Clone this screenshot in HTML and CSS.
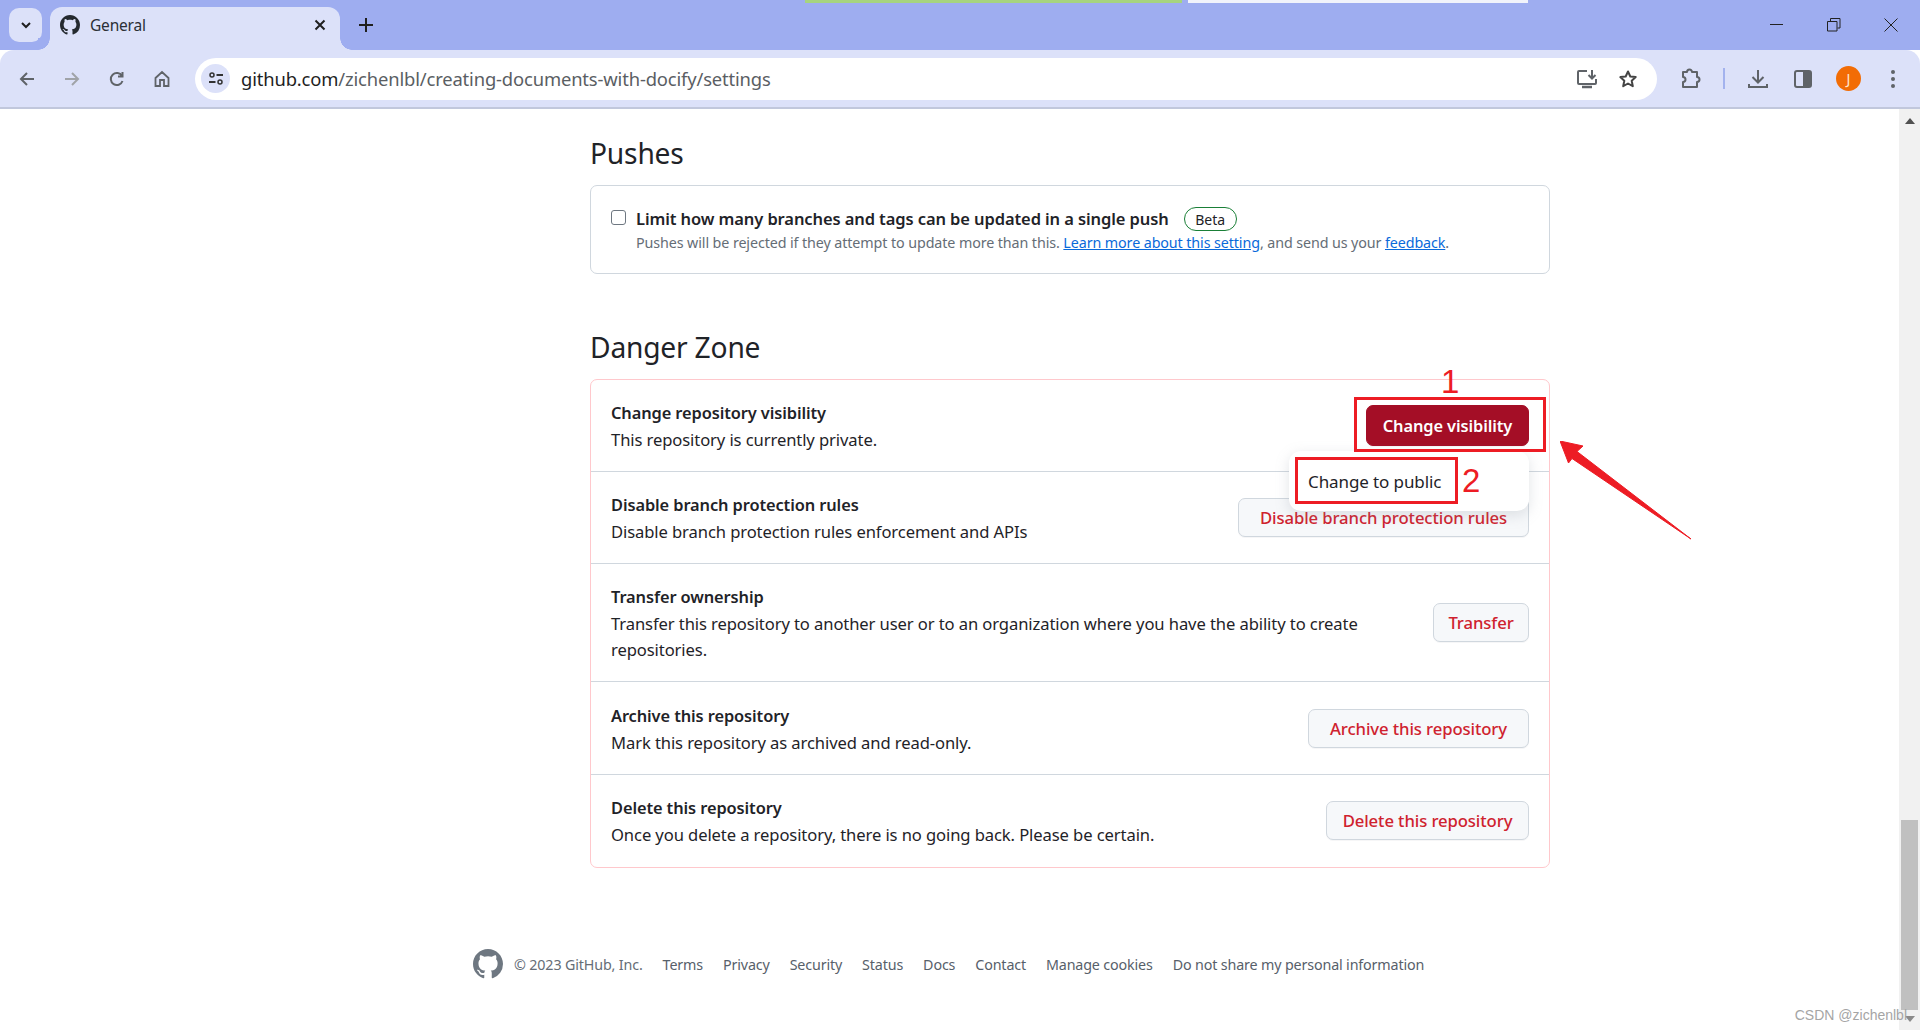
FILE: index.html
```html
<!DOCTYPE html>
<html lang="en">
<head>
<meta charset="utf-8">
<title>General</title>
<link rel="stylesheet" href="styles.css">
</head>
<body>
<svg class="defs" width="0" height="0"><defs><symbol id="gh" viewBox="0 0 16 16"><path d="M8 0C3.58 0 0 3.58 0 8c0 3.54 2.29 6.53 5.47 7.59.4.07.55-.17.55-.38 0-.19-.01-.82-.01-1.49-2.01.37-2.53-.49-2.69-.94-.09-.23-.48-.94-.82-1.13-.28-.15-.68-.52-.01-.53.63-.01 1.08.58 1.23.82.72 1.21 1.87.87 2.33.66.07-.52.28-.87.51-1.07-1.78-.2-3.64-.89-3.64-3.95 0-.87.31-1.59.82-2.15-.08-.2-.36-1.02.08-2.12 0 0 .67-.21 2.2.82.64-.18 1.32-.27 2-.27.68 0 1.36.09 2 .27 1.53-1.04 2.2-.82 2.2-.82.44 1.1.16 1.92.08 2.12.51.56.82 1.27.82 2.15 0 3.07-1.87 3.75-3.65 3.95.29.25.54.73.54 1.48 0 1.07-.01 1.93-.01 2.2 0 .21.15.46.55.38A8.013 8.013 0 0016 8c0-4.42-3.58-8-8-8z"/></symbol></defs></svg>
<header class="chrome">
  <div class="tabstrip">
    <div class="strip-marks"><span class="mark-green"></span><span class="mark-white"></span></div>
    <button class="tab-search"><svg width="14" height="14" viewBox="0 0 14 14"><path d="M3 5l4 4 4-4" fill="none" stroke="#1f1f1f" stroke-width="2"/></svg></button>
    <div class="tab">
      <svg class="tab-icon" width="20" height="20"><use href="#gh"/></svg>
      <span class="tab-title">General</span>
      <svg class="tab-close" width="12" height="12" viewBox="0 0 12 12"><path d="M1.5 1.5l9 9M10.5 1.5l-9 9" stroke="#1f1f1f" stroke-width="2"/></svg>
    </div>
    <svg class="new-tab" width="14" height="14" viewBox="0 0 14 14"><path d="M7 0v14M0 7h14" stroke="#1f1f1f" stroke-width="2"/></svg>
    <div class="win-controls">
      <svg width="14" height="14" viewBox="0 0 14 14"><path d="M0 6.500h13" stroke="#222" stroke-width="1"/></svg>
      <svg width="14" height="14" viewBox="0 0 14 14"><path d="M.5 3.500h9.500v9.500H.5zM3.500 3V.5h9.500V10H10.500" fill="none" stroke="#222" stroke-width="1"/></svg>
      <svg width="14" height="14" viewBox="0 0 14 14"><path d="M.5.5l13 13M13.500.5l-13 13" stroke="#222" stroke-width="1"/></svg>
    </div>
  </div>
  <div class="toolbar">
    <div class="nav">
      <svg width="18" height="18" viewBox="0 0 18 18"><path d="M16 9H3M9 3L3 9l6 6" fill="none" stroke="#5f6368" stroke-width="2"/></svg>
      <svg width="18" height="18" viewBox="0 0 18 18"><path d="M2 9h13M9 3l6 6-6 6" fill="none" stroke="#a0a3a8" stroke-width="2"/></svg>
      <svg width="18" height="18" viewBox="0 0 18 18"><path d="M14.500 11a6 6 0 1 1-.5-5M14.500 2v4.500H10" fill="none" stroke="#5f6368" stroke-width="2"/></svg>
      <svg width="18" height="18" viewBox="0 0 18 18"><path d="M2.500 8L9 2l6.500 6v8h-4.500v-6H7v6H2.500z" fill="none" stroke="#5f6368" stroke-width="1.800"/></svg>
    </div>
    <div class="omnibox">
      <span class="site-info"><svg width="16" height="16" viewBox="0 0 16 16"><circle cx="4" cy="4" r="2" fill="none" stroke="#333" stroke-width="1.500"/><path d="M8.500 4H15M1 11h6.500" stroke="#333" stroke-width="1.800"/><circle cx="12" cy="11" r="2" fill="none" stroke="#333" stroke-width="1.500"/></svg></span>
      <span class="url"><span class="url-host">github.com</span>/zichenlbl/creating-documents-with-docify/settings</span>
      <span class="omni-right">
        <svg width="22" height="22" viewBox="0 0 22 22"><path d="M11 3H3a1 1 0 0 0-1 1v11a1 1 0 0 0 1 1h16a1 1 0 0 0 1-1v-4" fill="none" stroke="#5f6368" stroke-width="2"/><path d="M6 19h10" stroke="#5f6368" stroke-width="2.500"/><path d="M16 2v8M12.500 7l3.500 3.500L19.500 7" fill="none" stroke="#5f6368" stroke-width="2"/></svg>
        <svg width="20" height="20" viewBox="0 0 20 20"><path d="M10 2.500l2.300 5 5.400.6-4 3.700 1.100 5.400-4.800-2.700-4.800 2.700 1.100-5.400-4-3.700 5.400-.6z" fill="none" stroke="#444" stroke-width="2" stroke-linejoin="round"/></svg>
      </span>
    </div>
    <div class="tools">
      <svg class="t-ext" width="22" height="22" viewBox="0 0 22 22"><path d="M8 4a2.500 2.500 0 0 1 5 0h5v5a2.500 2.500 0 0 1 0 5v5H4v-5a2.500 2.500 0 0 0 0-5V4z" fill="none" stroke="#5f6368" stroke-width="2" stroke-linejoin="round"/></svg>
      <span class="t-sep"></span>
      <svg class="t-dl" width="20" height="20" viewBox="0 0 20 20"><path d="M10 1v12M4.500 8l5.500 5.500L15.500 8" fill="none" stroke="#5f6368" stroke-width="2"/><path d="M1 15v3h18v-3" fill="none" stroke="#5f6368" stroke-width="2"/></svg>
      <svg class="t-side" width="18" height="18" viewBox="0 0 18 18"><rect x="1" y="1" width="16" height="16" rx="2" fill="none" stroke="#5f6368" stroke-width="2"/><rect x="9" y="1" width="8" height="16" fill="#5f6368"/></svg>
      <span class="avatar">J</span>
      <svg class="t-menu" width="6" height="20" viewBox="0 0 6 20"><circle cx="3" cy="3" r="2" fill="#5f6368"/><circle cx="3" cy="10" r="2" fill="#5f6368"/><circle cx="3" cy="17" r="2" fill="#5f6368"/></svg>
    </div>
  </div>
</header>

<div class="viewport">
  <main class="page">
    <h2 class="section-title">Pushes</h2>
    <section class="box pushes">
      <span class="checkbox"></span>
      <div>
        <div class="push-line"><strong class="push-label">Limit how many branches and tags can be updated in a single push</strong><span class="beta">Beta</span></div>
        <p class="note">Pushes will be rejected if they attempt to update more than this. <a href="#">Learn more about this setting</a>, and send us your <a href="#">feedback</a>.</p>
      </div>
    </section>

    <h2 class="section-title danger-title">Danger Zone</h2>
    <section class="box danger">
      <div class="row r1">
        <div class="row-text"><strong>Change repository visibility</strong><p>This repository is currently private.</p></div>
        <button class="btn btn-solid">Change visibility</button>
      </div>
      <div class="row r2">
        <div class="row-text"><strong>Disable branch protection rules</strong><p>Disable branch protection rules enforcement and APIs</p></div>
        <button class="btn btn-disable">Disable branch protection rules</button>
      </div>
      <div class="row r3">
        <div class="row-text"><strong>Transfer ownership</strong><p>Transfer this repository to another user or to an organization where you have the ability to create repositories.</p></div>
        <button class="btn btn-transfer">Transfer</button>
      </div>
      <div class="row r4">
        <div class="row-text"><strong>Archive this repository</strong><p>Mark this repository as archived and read-only.</p></div>
        <button class="btn btn-archive">Archive this repository</button>
      </div>
      <div class="row r5">
        <div class="row-text"><strong>Delete this repository</strong><p>Once you delete a repository, there is no going back. Please be certain.</p></div>
        <button class="btn btn-delete">Delete this repository</button>
      </div>
    </section>

    <footer class="footer">
      <svg class="foot-logo" width="30" height="30"><use href="#gh"/></svg>
      <span>© 2023 GitHub, Inc.</span>
      <a href="#">Terms</a><a href="#">Privacy</a><a href="#">Security</a><a href="#">Status</a><a href="#">Docs</a><a href="#">Contact</a><a href="#">Manage cookies</a><a href="#">Do not share my personal information</a>
    </footer>
  </main>

  <div class="scrollbar">
    <svg class="sb-up" width="10" height="6" viewBox="0 0 10 6"><path d="M5 0l5 6H0z" fill="#505050"/></svg>
    <span class="sb-thumb"></span>
    <svg class="sb-down" width="10" height="6" viewBox="0 0 10 6"><path d="M5 6L0 0h10z" fill="#8a8a8a"/></svg>
  </div>
</div>

<!-- screenshot annotations drawn over the page -->
<div class="menu"><span>Change to public</span></div>
<div class="anno-box anno-a"></div>
<div class="anno-box anno-b"></div>
<span class="anno-num num-1">1</span>
<span class="anno-num num-2">2</span>
<svg class="anno-arrow" width="140" height="110" viewBox="0 0 140 110"><path d="M0 0L23 5L17 10.500L131 98L12 17.500L8.500 22Z" fill="#ed1c24" stroke="#ed1c24" stroke-width="1" stroke-linejoin="round"/></svg>
<span class="watermark">CSDN @zichenlbl</span>
</body>
</html>
```
FILE: styles.css
```css
* { box-sizing: border-box; }
html, body { margin: 0; height: 1030px; overflow: hidden; background: #fff; }
body { font-family: "Noto Sans", "Open Sans", sans-serif; color: #1f2328; position: relative; }
.defs { position: absolute; }
h2, p { margin: 0; }
button { font-family: inherit; }

.chrome { height: 109px; display: flex; flex-direction: column; }
.tabstrip { position: relative; height: 50px; background: #9eadf0; display: flex; align-items: flex-start; flex: none; }
.strip-marks { position: absolute; top: 0; left: 805px; display: flex; gap: 6px; height: 3px; }
.mark-green { width: 377px; background: #a6d47f; }
.mark-white { width: 340px; background: #f1f3fb; }
.tab-search { width: 33px; height: 34px; margin: 8px 0 0 9px; border: 0; border-radius: 10px; background: #dce1f9; display: flex; align-items: center; justify-content: center; padding: 0; flex: none; }
.tab { width: 290px; height: 43px; margin: 7px 0 0 8px; padding: 0 14px 8px 10px; background: #dce1f9; border-radius: 12px 12px 0 0; display: flex; align-items: center; flex: none; position: relative; }
.tab::before, .tab::after { content: ""; position: absolute; bottom: 0; width: 12px; height: 12px; }
.tab::before { left: -12px; background: radial-gradient(circle at 0 0, #9eadf0 11.5px, #dce1f9 12px); }
.tab::after { right: -12px; background: radial-gradient(circle at 100% 0, #9eadf0 11.5px, #dce1f9 12px); }
.tab-icon { fill: #24292f; flex: none; }
.tab-title { font-size: 15.500px; margin-left: 10px; flex: 1; color: #2b2f36; letter-spacing: -.2px; }
.new-tab { margin: 18px 0 0 19px; flex: none; }
.win-controls { margin-left: auto; display: flex; gap: 43px; padding: 18px 22px 0 0; }

.toolbar { height: 59px; background: #dce1f9; border-bottom: 2px solid #c1c7dc; border-radius: 14px 14px 0 0; display: flex; align-items: center; padding: 0 14px 0 18px; flex: none; position: relative; }
.nav { display: flex; gap: 27px; flex: none; align-items: center; }
.omnibox { width: 1462px; height: 42px; margin-left: 24px; background: #fff; border-radius: 21px; display: flex; align-items: center; padding: 0 19px 0 6px; flex: none; }
.site-info { width: 29px; height: 29px; border-radius: 50%; background: #dce1f9; display: flex; align-items: center; justify-content: center; flex: none; }
.url { margin-left: 11px; font-size: 18.400px; color: #5a5e63; white-space: nowrap; letter-spacing: -.15px; }
.url-host { color: #1f1f1f; }
.omni-right { margin-left: auto; display: flex; align-items: center; gap: 20px; }
.tools { margin-left: 22px; display: flex; align-items: center; flex: none; }
.t-sep { width: 2px; height: 21px; background: #a3b2ee; margin: 0 23px 0 22px; }
.t-side { margin-left: 26px; }
.avatar { width: 25px; height: 25px; margin-left: 24px; border-radius: 50%; background: #f26c05; color: #ffe7d2; font-size: 14px; display: flex; align-items: center; justify-content: center; }
.t-menu { margin-left: 29px; }

.viewport { height: 921px; display: flex; }
.page { flex: 1; min-width: 0; padding: 0 349px 0 590px; }
.section-title { font-size: 28.200px; font-weight: 400; line-height: 36px; letter-spacing: -.2px; color: #1f2328; }
.section-title:first-child { margin-top: 26px; }
.danger-title { margin-top: 55px; }
.box { border: 1px solid #d0d7de; border-radius: 7px; width: 960px; }
.pushes { margin-top: 14px; height: 89px; display: flex; padding: 21px 0 0 20px; gap: 10px; }
.checkbox { width: 15px; height: 15px; margin-top: 3px; border: 1px solid #6e7781; border-radius: 3px; flex: none; }
.push-line { display: flex; align-items: center; height: 24px; }
.push-label { font-size: 16.500px; font-weight: 600; letter-spacing: -.1px; white-space: nowrap; margin-top: -2px; }
.beta { margin-left: 15px; height: 24px; padding: 0 10.500px; border: 1px solid #1a7f37; border-radius: 12px; font-size: 14px; line-height: 23px; color: #1f2328; }
.note { margin-top: 1px; font-size: 14.300px; line-height: 21px; color: #656d76; white-space: nowrap; letter-spacing: -.1px; }
.note a { color: #0969da; text-decoration: underline; }

.danger { margin-top: 14px; height: 489px; border-color: #ffc8cc; display: flex; flex-direction: column; }
.row { display: flex; align-items: center; justify-content: space-between; padding: 0 20px; border-top: 1px solid #d0d7de; flex: none; }
.row:first-child { border-top: 0; }
.r1 { height: 91px; }
.r2 { height: 92px; }
.r3 { height: 118px; }
.r4 { height: 93px; }
.r5 { height: 93px; padding-bottom: 2px; }
.row-text { width: 800px; padding-top: 2px; }
.row-text strong { display: block; font-size: 16.400px; line-height: 26px; font-weight: 600; letter-spacing: -.1px; }
.row-text p { margin-top: 1px; font-size: 16.600px; line-height: 26px; letter-spacing: -.1px; }
.btn { height: 39px; border: 1px solid #d0d7de; border-radius: 7px; background: #f6f8fa; color: #cf222e; font-size: 16.700px; font-weight: 500; padding: 0; white-space: nowrap; flex: none; letter-spacing: -.1px; box-shadow: 0 1px 0 rgba(31,35,40,.04); }
.btn-solid { width: 163px; height: 41px; background: #a40e26; border-color: #a40e26; color: #fff; font-size: 16.400px; font-weight: 600; }
.btn-disable { width: 291px; }
.btn-transfer { width: 96px; }
.btn-archive { width: 221px; }
.btn-delete { width: 203px; }

.footer { margin-top: 81px; width: 960px; margin-left: -117px; display: flex; align-items: center; gap: 20px; font-size: 14.300px; color: #656d76; white-space: nowrap; letter-spacing: -.15px; }
.footer a { color: #57606a; text-decoration: none; }
.foot-logo { fill: #6e7781; margin-right: -9px; flex: none; }

.scrollbar { width: 21px; flex: none; background: #f1f1f1; display: flex; flex-direction: column; align-items: center; padding-top: 9px; }
.sb-up { flex: none; }
.sb-thumb { width: 17px; height: 190px; margin-top: 696px; background: #c0c0c0; flex: none; }
.sb-down { margin-top: 6px; flex: none; }

.menu { position: absolute; left: 1289px; top: 451px; width: 240px; height: 60px; background: #fff; border-radius: 12px; box-shadow: 0 4px 14px rgba(140,149,159,.25); display: flex; align-items: center; padding-left: 19px; font-size: 17px; color: #1f2328; letter-spacing: -.1px; }
.anno-box { position: absolute; border: 3px solid #ed1c24; }
.anno-a { left: 1354px; top: 397px; width: 192px; height: 55px; }
.anno-b { left: 1295px; top: 457px; width: 163px; height: 47px; }
.anno-num { position: absolute; color: #ed1c24; font-family: "Liberation Sans", sans-serif; font-size: 33px; line-height: 33px; }
.num-1 { left: 1441px; top: 365px; }
.num-2 { left: 1462px; top: 464px; }
.anno-arrow { position: absolute; left: 1560px; top: 441px; }
.watermark { position: absolute; right: 13px; top: 1007px; font-family: "Liberation Sans", sans-serif; font-size: 14px; color: #a5a5a5; }
```
